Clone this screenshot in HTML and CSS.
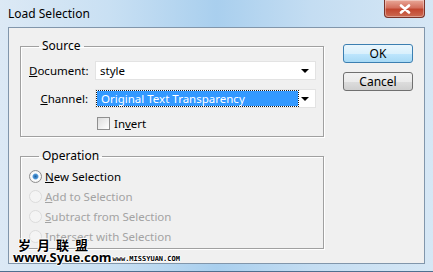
FILE: index.html
```html
<!DOCTYPE html>
<html lang="en">
<head>
  <meta charset="UTF-8" />
  <title>Load Selection</title>
  <link rel="stylesheet" href="styles.css">
</head>
<body>
  <div id="window">
    <div id="titlebar">
      <span class="title">Load Selection</span>
      <button class="close" aria-label="Close">
        <svg width="14" height="10" viewBox="0 0 14 10"><path d="M3 1.5 L11 8.5 M11 1.5 L3 8.5" stroke="#fff" stroke-width="2.6" stroke-linecap="round"/></svg>
      </button>
    </div>

    <div id="client">
      <div class="groups">
        <fieldset class="group">
          <legend>Source</legend>
          <div class="form-grid">
            <label><u>D</u>ocument:</label>
            <div class="combo">
              <span class="value">style</span>
              <span class="arrow"></span>
            </div>
            <label><u>C</u>hannel:</label>
            <div class="combo">
              <span class="value selected">Original Text Transparency</span>
              <span class="arrow"></span>
            </div>
            <span></span>
            <div class="check-row">
              <span class="checkbox"></span>
              <span>In<u>v</u>ert</span>
            </div>
          </div>
        </fieldset>

        <fieldset class="group operation">
          <legend>Operation</legend>
          <div class="radio-row">
            <span class="radio checked"></span>
            <span><u>N</u>ew Selection</span>
          </div>
          <div class="radio-row disabled">
            <span class="radio"></span>
            <span><u>A</u>dd to Selection</span>
          </div>
          <div class="radio-row disabled">
            <span class="radio"></span>
            <span><u>S</u>ubtract from Selection</span>
          </div>
          <div class="radio-row disabled">
            <span class="radio"></span>
            <span><u>I</u>ntersect with Selection</span>
          </div>
        </fieldset>
      </div>

      <div class="buttons">
        <button class="btn default">OK</button>
        <button class="btn">Cancel</button>
      </div>
    </div>

    <div class="watermark">
      <div class="wm-cn">岁月联盟</div>
      <div class="wm-line"><span class="wm-site">www.Syue.com</span><span class="wm-url">www.MISSYUAN.COM</span></div>
    </div>
  </div>
</body>
</html>
```

FILE: styles.css
```css
:root {
  --face: #f0f0f0;
  --edge: #a0a0a0;
  --muted: #a3a3a3;
  --select: #3399ff;
}

html, body {
  margin: 0;
  padding: 0;
  background: #fff;
  font-family: "Noto Sans", "Open Sans", sans-serif;
  font-size: 11.5px;
  color: #000;
}

#window {
  position: relative;
  width: 433px;
  height: 272px;
  box-sizing: border-box;
  padding: 0 8px 8px;
  background: linear-gradient(90deg, #dce9f5 0%, #c9e0f3 25%, #a9cfee 50%, #c4ddf2 72%, #d6e7f5 100%);
  border-bottom: 1px solid #4f6f8f;
  overflow: hidden;
}

#titlebar {
  height: 27px;
  display: flex;
  justify-content: space-between;
  align-items: flex-start;
}

#titlebar .title {
  margin-top: 5px;
  font-size: 12px;
}

#titlebar .close {
  width: 41px;
  height: 18px;
  padding: 0;
  border: 1px solid #7a3329;
  border-top: none;
  border-radius: 0 0 4px 4px;
  background: linear-gradient(#e9a898, #d4705e 45%, #c2462f 55%, #cc6a52);
  display: flex;
  align-items: center;
  justify-content: center;
  box-shadow: inset 0 0 0 1px rgba(255, 255, 255, 0.35);
}

#client {
  height: 237px;
  box-sizing: border-box;
  background: var(--face);
  border: 1px solid #8196ab;
  padding: 11px 0 0 11px;
  display: flex;
  gap: 19px;
}

.groups {
  display: flex;
  flex-direction: column;
  gap: 12px;
  width: 304px;
}

.group {
  margin: 0;
  border: 1px solid var(--edge);
  box-shadow: 1px 1px 0 #fff, inset 1px 1px 0 #fff;
  padding: 8px 7px 6px 8px;
}

.group legend {
  padding: 0 3px;
  margin-left: 10px;
  line-height: 14px;
  font-size: 12px;
}

.form-grid {
  display: grid;
  grid-template-columns: 59px 221px;
  column-gap: 7px;
  row-gap: 9px;
  align-items: center;
}

.form-grid label {
  text-align: right;
}

.combo {
  height: 19px;
  box-sizing: border-box;
  background: #fff;
  border: 1px solid #e3e3e3;
  display: flex;
  align-items: center;
  justify-content: space-between;
  padding: 0 3px 0 4px;
}

.combo .value.selected {
  margin-left: -3px;
  padding: 0 4px;
  width: 193px;
  line-height: 15px;
  background: var(--select);
  color: #fff;
  outline: 1px dotted #1a1a1a;
}

.combo .arrow {
  width: 0;
  height: 0;
  margin-right: 3px;
  border-left: 4px solid transparent;
  border-right: 4px solid transparent;
  border-top: 4px solid #000;
}

.check-row {
  display: flex;
  align-items: center;
  gap: 4px;
  height: 13px;
  padding-left: 2px;
}

.checkbox {
  width: 11px;
  height: 11px;
  border: 1px solid #8f8f8f;
  background: linear-gradient(135deg, #dcdcdc, #fff);
}

.operation {
  padding: 3px 7px 2px 8px;
}

.radio-row {
  height: 20px;
  display: flex;
  align-items: center;
  gap: 3px;
}

.radio {
  width: 11px;
  height: 11px;
  border-radius: 50%;
  border: 1px solid #8f8f8f;
  background: radial-gradient(circle, #fff 30%, #e2e2e2);
}

.radio.checked {
  background: radial-gradient(circle, #1f5f9f 0, #4f98d8 30%, #fff 45%, #e2e2e2);
}

.radio-row.disabled {
  color: var(--muted);
}

.radio-row.disabled .radio {
  border-color: #dcdcdc;
  background: #f4f4f4;
}

.buttons {
  display: flex;
  flex-direction: column;
  gap: 9px;
  margin-top: 5px;
}

.btn {
  width: 70px;
  height: 19px;
  padding: 0;
  font: inherit;
  font-size: 12px;
  line-height: 15px;
  border: 1px solid #707070;
  border-radius: 3px;
  background: linear-gradient(#f2f2f2, #ebebeb 50%, #dddddd 51%, #cfcfcf);
}

.btn.default {
  border-color: #3c7fb1;
  background: linear-gradient(#eaf6fd, #d9f0fc 50%, #bee6fd 51%, #a7d9f5);
}

/* site watermark stamped over the bottom-left corner */
.watermark {
  position: absolute;
  left: 13px;
  top: 238px;
  font-weight: bold;
  color: #000;
  text-shadow: 1px 0 #fff, -1px 0 #fff, 0 1px #fff, 0 -1px #fff;
}

.wm-cn {
  margin-left: 5px;
  font-family: "Noto Sans CJK SC", sans-serif;
  font-size: 13px;
  line-height: 13px;
  letter-spacing: 6px;
}

.wm-line {
  display: flex;
  align-items: flex-end;
  gap: 1px;
}

.wm-site {
  font-size: 13px;
  line-height: 13px;
}

.wm-url {
  font-family: "DejaVu Sans Mono", monospace;
  font-size: 7px;
  line-height: 9px;
}
```
